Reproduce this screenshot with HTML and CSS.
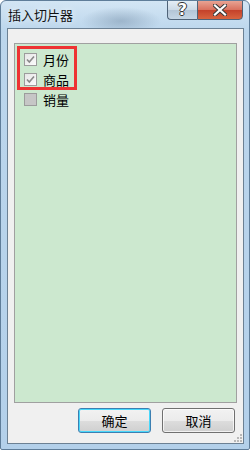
FILE: index.html
```html
<!DOCTYPE html>
<html lang="zh-CN">
<head>
  <meta charset="UTF-8">
  <meta name="viewport" content="width=device-width, initial-scale=1.0">
  <title>插入切片器</title>
  <link rel="stylesheet" href="styles.css">
</head>
<body>
  <div class="window">
    <div class="titlebar">
      <span class="title">插入切片器</span>
      <div class="caption-buttons">
        <div class="cap-btn help">?</div>
        <div class="cap-btn close">
          <svg width="14" height="12" viewBox="0 0 14 12">
            <path d="M2 1.5 L12 10.5 M12 1.5 L2 10.5" stroke="#3a3a3a" stroke-width="4.2" stroke-linecap="square"/>
            <path d="M2 1.5 L12 10.5 M12 1.5 L2 10.5" stroke="#ffffff" stroke-width="2.2" stroke-linecap="square"/>
          </svg>
        </div>
      </div>
    </div>

    <div class="client">
      <div class="field-list">
        <div class="highlight">
          <label class="item">
            <span class="check checked">
              <svg width="11" height="11" viewBox="0 0 11 11"><path d="M2 5.5 L4.3 8 L9 2.5" fill="none" stroke="#8a8a8a" stroke-width="1.6"/></svg>
            </span>
            <span class="label">月份</span>
          </label>
          <label class="item">
            <span class="check checked">
              <svg width="11" height="11" viewBox="0 0 11 11"><path d="M2 5.5 L4.3 8 L9 2.5" fill="none" stroke="#8a8a8a" stroke-width="1.6"/></svg>
            </span>
            <span class="label">商品</span>
          </label>
        </div>
        <label class="item item-plain">
          <span class="check empty"></span>
          <span class="label">销量</span>
        </label>
      </div>

      <div class="actions">
        <button class="btn btn-default">确定</button>
        <button class="btn">取消</button>
      </div>

      <svg class="grip" width="8" height="8" viewBox="0 0 8 8">
        <rect x="6" y="0" width="2" height="2" fill="#b8b8b8"/>
        <rect x="3" y="3" width="2" height="2" fill="#b8b8b8"/>
        <rect x="6" y="3" width="2" height="2" fill="#b8b8b8"/>
        <rect x="0" y="6" width="2" height="2" fill="#b8b8b8"/>
        <rect x="3" y="6" width="2" height="2" fill="#b8b8b8"/>
        <rect x="6" y="6" width="2" height="2" fill="#b8b8b8"/>
      </svg>
    </div>
  </div>
</body>
</html>
```

FILE: styles.css
```css
* {
  box-sizing: border-box;
}

body {
  margin: 0;
  width: 250px;
  height: 450px;
  font-family: "Noto Sans CJK SC", "Noto Sans", sans-serif;
  background: #ffffff;
}

.window {
  width: 250px;
  height: 450px;
  border: 1px solid #5f7d99;
  border-radius: 6px 6px 2px 2px;
  background:
    radial-gradient(ellipse 40px 14px at 120px 20px, rgba(110, 135, 160, 0.45), rgba(110, 135, 160, 0)),
    linear-gradient(to bottom, #d3e5f4 0px, #bcd6ec 30px, #b3d0ea 100%);
  display: flex;
  flex-direction: column;
  overflow: hidden;
}

.titlebar {
  height: 27px;
  display: flex;
  align-items: flex-start;
}

.title {
  padding: 5px 0 0 7px;
  font-size: 13px;
  line-height: 18px;
  color: #111;
  text-shadow: 0 0 6px rgba(255, 255, 255, 0.9);
}

.caption-buttons {
  margin: -1px 6px 0 auto;
  display: flex;
}

.cap-btn {
  height: 20px;
  border: 1px solid #4f6378;
  display: flex;
  align-items: center;
  justify-content: center;
}

.help {
  width: 30px;
  border-radius: 0 0 0 4px;
  border-right: none;
  background: linear-gradient(to bottom, #e4edf5 0%, #cbd9e6 50%, #b3c5d6 51%, #c5d6e5 100%);
  font-family: "DejaVu Sans", sans-serif;
  font-weight: bold;
  font-size: 16px;
  line-height: 18px;
  color: #fff;
  text-shadow: -1px 0 #333, 1px 0 #333, 0 -1px #333, 0 1px #333;
}

.close {
  width: 46px;
  border-radius: 0 0 4px 0;
  background: linear-gradient(to bottom, #e8a393 0%, #d9705d 50%, #c4412a 51%, #d8643f 100%);
}

.client {
  position: relative;
  flex: 1;
  margin: 0 5px 5px 6px;
  border: 1px solid #6c8194;
  background: #f0f0f0;
  padding: 14px 6px 10px 6px;
  display: flex;
  flex-direction: column;
}

.field-list {
  height: 360px;
  border: 1px solid #a0a0a0;
  background: #cce8cf;
  padding: 2px 0 0 2px;
}

.highlight {
  width: 60px;
  border: 3px solid #ee3333;
  padding: 4px 0 1px 4px;
  display: flex;
  flex-direction: column;
  gap: 7px;
}

.item {
  display: flex;
  align-items: center;
  height: 13px;
  font-size: 13px;
  color: #000;
}

.item-plain {
  margin: 3px 0 0 7px;
}

.check {
  width: 13px;
  height: 13px;
  border: 1px solid #9c9c9c;
  display: flex;
  align-items: center;
  justify-content: center;
  flex-shrink: 0;
}

.checked {
  background: linear-gradient(to bottom right, #e6e6e6, #fbfbfb);
}

.empty {
  background: #c6c6c6;
}

.label {
  margin-left: 6px;
  line-height: 13px;
  white-space: nowrap;
}

.actions {
  margin-top: 5px;
  display: flex;
  justify-content: flex-end;
  gap: 11px;
  padding-right: 2px;
}

.btn {
  width: 73px;
  height: 25px;
  border: 1px solid #707070;
  border-radius: 3px;
  background: linear-gradient(to bottom, #f2f2f2 0%, #ebebeb 50%, #dddddd 51%, #cfcfcf 100%);
  font-family: "Noto Sans CJK SC", sans-serif;
  font-size: 13px;
  color: #000;
  padding: 0;
  box-shadow: inset 0 0 0 1px rgba(255, 255, 255, 0.7);
}

.btn-default {
  border-color: #3c7fb1;
  box-shadow: inset 0 0 0 1px #48d8fb;
}

.grip {
  position: absolute;
  right: 1px;
  bottom: 1px;
}
```
